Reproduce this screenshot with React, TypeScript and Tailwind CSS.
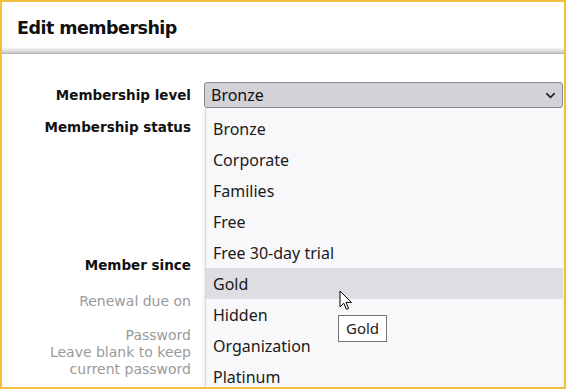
import { ChevronDown } from "lucide-react";

const OPTIONS = [
  "Bronze",
  "Corporate",
  "Families",
  "Free",
  "Free 30-day trial",
  "Gold",
  "Hidden",
  "Organization",
  "Platinum",
];

function Cursor() {
  return (
    <svg width="15" height="22" viewBox="0 0 15 22" className="absolute left-[133px] top-[22px]">
      <path
        d="M1 1 L1 17 L4.8 13.2 L7.4 19.4 L9.6 18.4 L7 12.4 L12.4 12.4 Z"
        fill="#ffffff"
        stroke="#000000"
        strokeWidth="1"
        strokeLinejoin="round"
      />
    </svg>
  );
}

function MembershipSelect() {
  return (
    <div className="relative">
      <div className="h-[26px] flex items-center justify-between rounded-[3px] border border-[#8a8a8e] bg-[#d2d2d8] pl-[6px] pr-[4px] text-[16px] text-[#111] font-['Noto_Sans',sans-serif]">
        <span>Bronze</span>
        <ChevronDown className="w-[15px] h-[15px] text-[#222]" strokeWidth={2.6} />
      </div>
      <ul className="absolute left-[1px] right-0 top-[26px] pt-[5px] bg-[#f8f8fa] border-l border-[#d8d8dc] font-['Noto_Sans',sans-serif] text-[16px] text-[#1a1a1a] shadow-[0_2px_4px_rgba(0,0,0,0.15)]">
        {OPTIONS.map((opt) => (
          <li
            key={opt}
            className={`relative h-[31px] flex items-center pl-[7px] ${opt === "Gold" ? "bg-[#dddde2]" : ""}`}
          >
            {opt}
            {opt === "Gold" ? (
              <>
                <Cursor />
                <span className="absolute left-[132px] top-[47px] z-10 border border-[#767676] bg-white px-[7px] py-[3px] text-[15px] leading-[19px] text-[#222]">
                  Gold
                </span>
              </>
            ) : null}
          </li>
        ))}
      </ul>
    </div>
  );
}

export default function App() {
  return (
    <div className="w-[566px] h-[389px] overflow-hidden bg-white border-2 border-[#f1c13e] font-['DejaVu_Sans',Verdana,sans-serif]">
      <div className="relative h-[52px] flex items-center pl-[15px] bg-white">
        <h1 className="text-[17.5px] font-bold tracking-[-0.03em] text-[#111]">Edit membership</h1>
        <div className="absolute left-0 right-0 bottom-0 h-[7px] bg-gradient-to-b from-white to-[#c8c8c8] border-b border-[#b4b4b4]" />
      </div>

      <div className="grid grid-cols-[189px_1fr] gap-x-[13px] pt-[28px] text-[14px]">
        <div className="flex flex-col items-end text-right">
          <div className="h-[26px] flex items-center font-bold text-[13.5px] text-[#111]">Membership level</div>
          <div className="mt-[9px] font-bold text-[13.5px] text-[#111]">Membership status</div>
          <div className="mt-[118px] font-bold text-[13.5px] text-[#111]">Member since</div>
          <div className="mt-[15px] text-[#9a9a9a]">Renewal due on</div>
          <div className="mt-[15px] leading-[17px] text-[#9a9a9a]">
            Password
            <br />
            Leave blank to keep
            <br />
            current password
          </div>
        </div>
        <div className="pr-[1px]">
          <MembershipSelect />
        </div>
      </div>
    </div>
  );
}
